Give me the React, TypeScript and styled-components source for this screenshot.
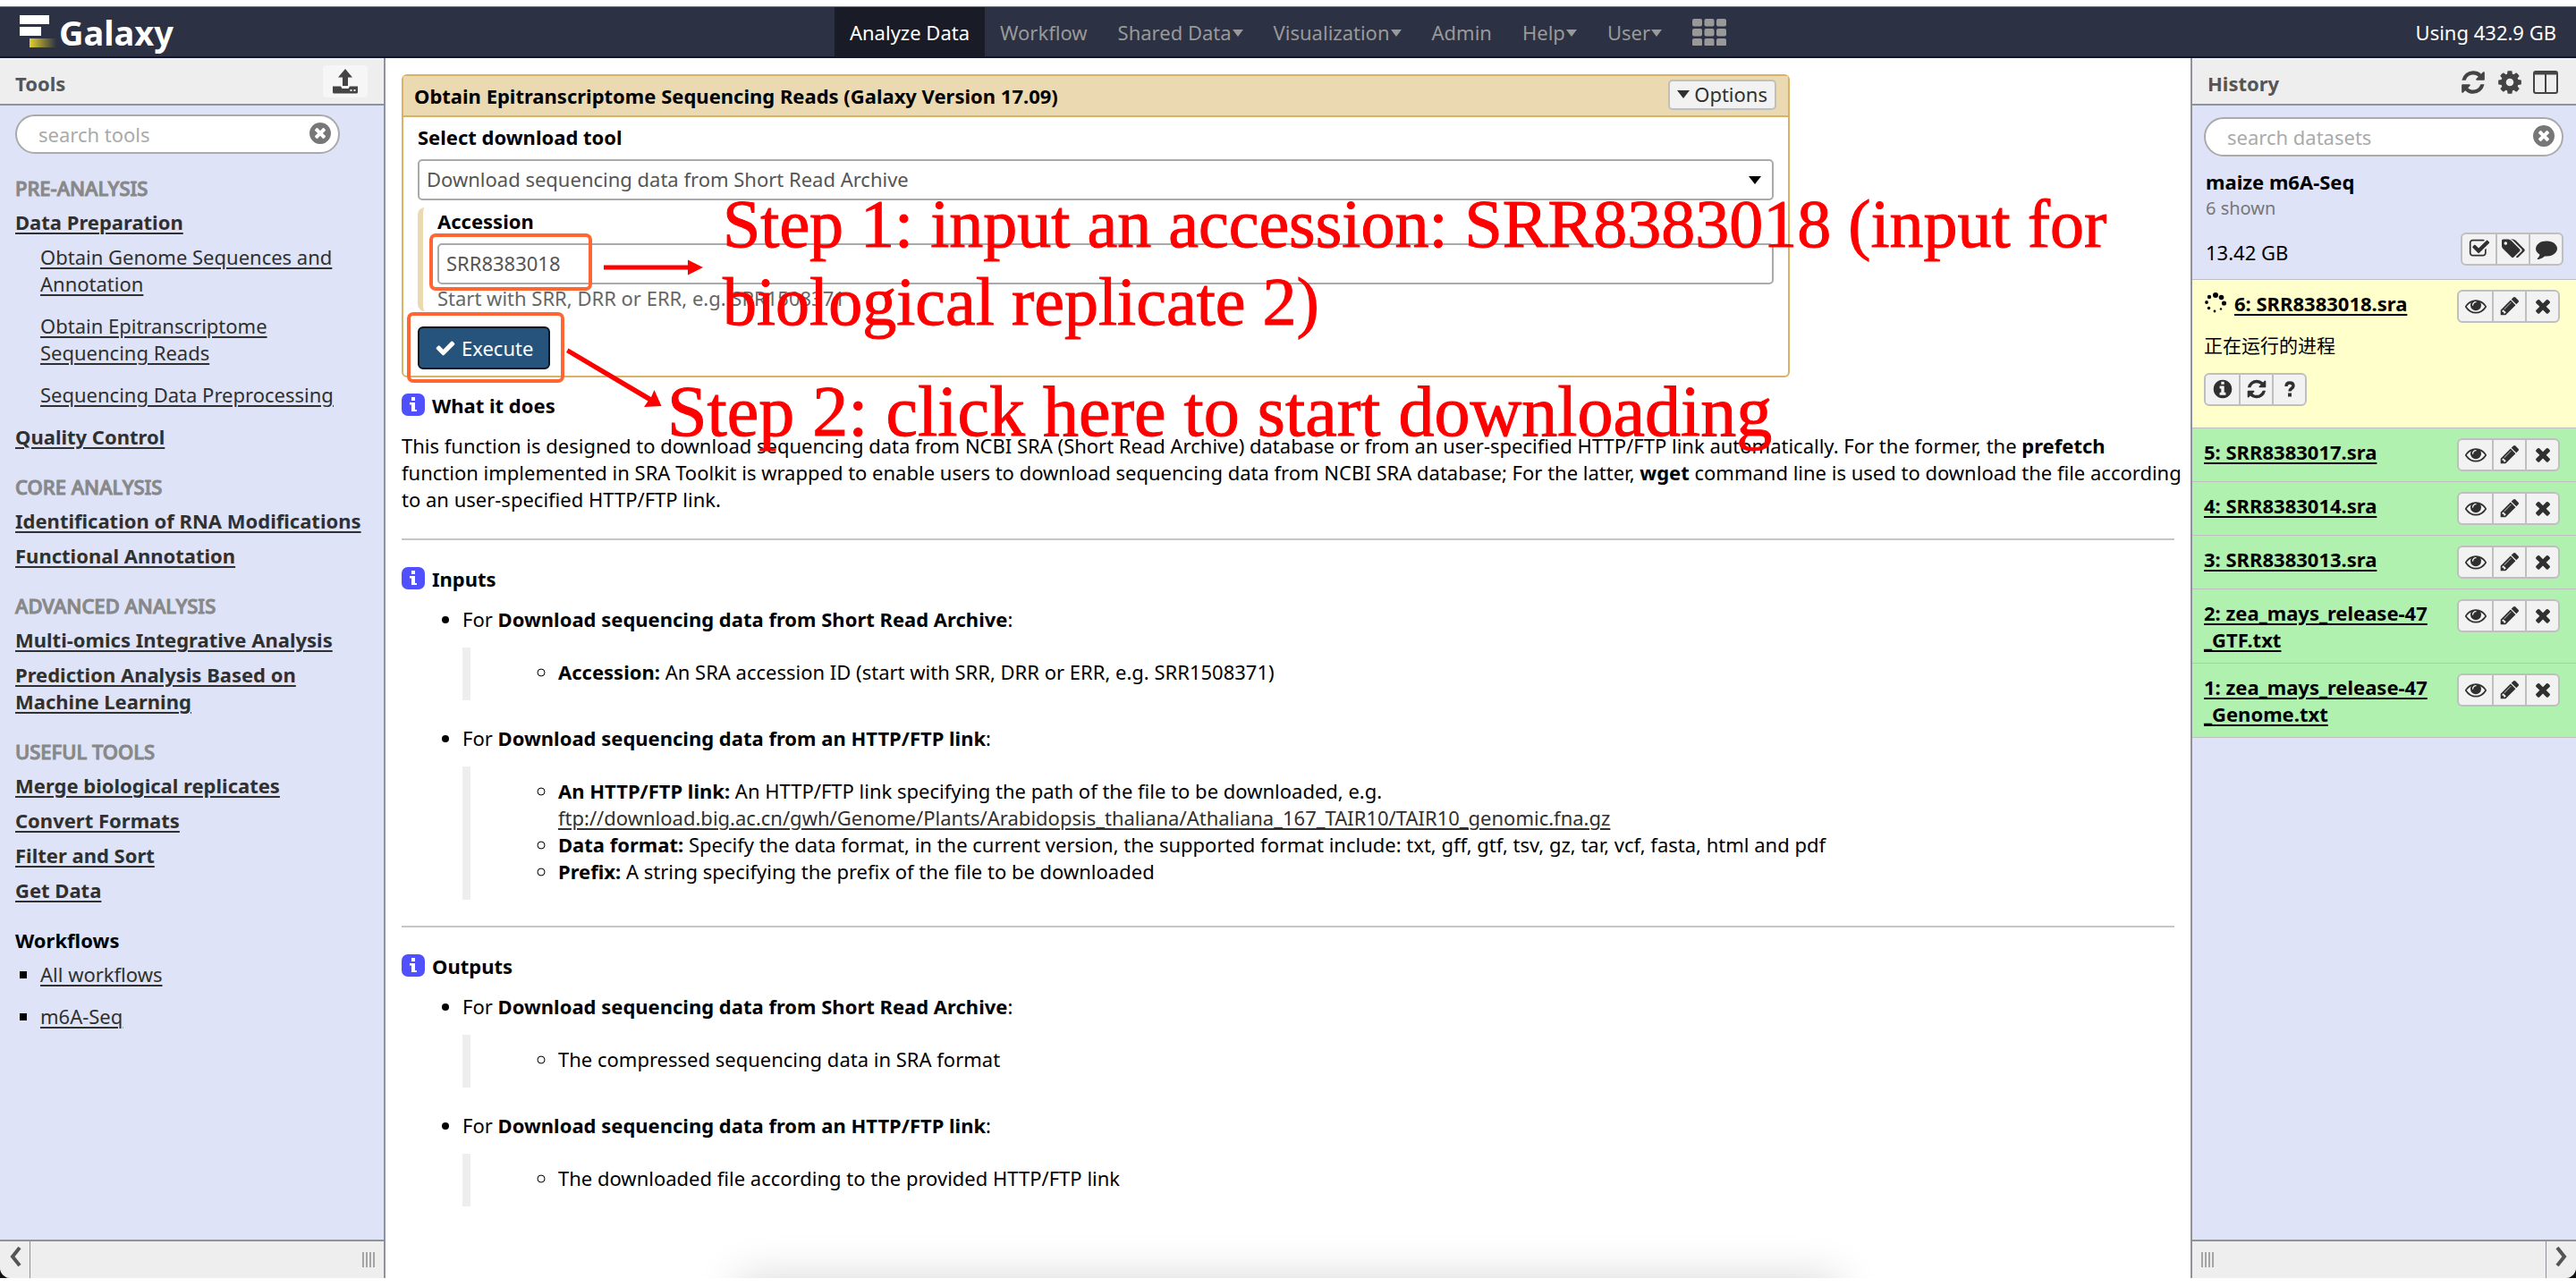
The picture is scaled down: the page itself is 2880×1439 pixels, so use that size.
import React from "react";
import styled, { createGlobalStyle, css } from "styled-components";

const sans = `"Noto Sans", "Open Sans", "Noto Sans CJK SC", sans-serif`;

const c = {
  navy: "#2c3143",
  navyActive: "#191b26",
  panel: "#dee3f7",
  bar: "#eeeeee",
  line: "#8f919b",
  tan: "#ebd9b2",
  tanLine: "#d8b365",
  control: "#f2f2f2",
  controlLine: "#bfbfbf",
  ink: "#303030",
  red: "#ff0000",
  orange: "#ff6633",
};

const Global = createGlobalStyle`
  *, *::before, *::after { box-sizing: border-box; }
  body { margin: 0; background: #fff; color: #000; font: 22px/30px ${sans}; }
  button, input, select { font: inherit; color: inherit; margin: 0; }
  a { color: ${c.ink}; text-decoration: underline; text-underline-offset: 3px; text-decoration-thickness: 2px; }
  ul, h1, h2, h3, p, blockquote { margin: 0; padding: 0; font: inherit; }
`;

/* ---------- icons ---------- */

const circle =
  "q0 209-103 385.5t-279.5 279.5-385.5 103-385.5-103-279.5-279.5-103-385.5 103-385.5 279.5-279.5 385.5-103 385.5 103 279.5 279.5 103 385.5z";

const glyphs = {
  refresh:
    "M1639 1056q0 5-1 7-64 268-268 434.5t-478 166.5q-146 0-282.5-55t-243.5-157l-129 129q-19 19-45 19t-45-19-19-45v-448q0-26 19-45t45-19h448q26 0 45 19t19 45-19 45l-137 137q71 66 161 102t187 36q134 0 250-65t186-179q11-17 53-117 8-23 30-23h192q13 0 22.5 9.5t9.5 22.5zm25-800v448q0 26-19 45t-45 19h-448q-26 0-45-19t-19-45 19-45l138-138q-148-137-349-137-134 0-250 65t-186 179q-11 17-53 117-8 23-30 23h-199q-13 0-22.5-9.5t-9.5-22.5v-7q65-268 270-434.5t480-166.5q146 0 284 55.5t245 156.5l130-129q19-19 45-19t45 19 19 45z",
  cog: "M1152 896q0-106-75-181t-181-75-181 75-75 181 75 181 181 75 181-75 75-181zm512-109v222q0 12-8 23t-20 13l-185 28q-19 54-39 91 35 50 107 138 10 12 10 25t-9 23q-27 37-99 108t-94 71q-12 0-26-9l-138-108q-44 23-91 38-16 136-29 186-7 28-36 28h-222q-14 0-24.5-8.5t-11.5-21.5l-28-184q-49-16-90-37l-141 107q-10 9-25 9-14 0-25-11-126-114-165-168-7-10-7-23 0-12 8-23 15-21 51-66.5t54-70.5q-27-50-41-99l-183-27q-13-2-21-12.5t-8-23.5v-222q0-12 8-23t19-13l186-28q14-46 39-92-40-57-107-138-10-12-10-24 0-10 9-23 26-36 98.5-107.5t94.5-71.5q13 0 26 10l138 107q44-23 91-38 16-136 29-186 7-28 36-28h222q14 0 24.5 8.5t11.5 21.5l28 184q49 16 90 37l142-107q9-9 24-9 13 0 25 10 129 119 165 170 7 8 7 22 0 12-8 23-15 21-51 66.5t-54 70.5q26 50 41 98l183 28q13 2 21 12.5t8 23.5z",
  times:
    "M1490 1322q0 40-28 68l-136 136q-28 28-68 28t-68-28l-294-294-294 294q-28 28-68 28t-68-28l-136-136q-28-28-28-68t28-68l294-294-294-294q-28-28-28-68t28-68l136-136q28-28 68-28t68 28l294 294 294-294q28-28 68-28t68 28l136 136q28 28 28 68t-28 68l-294 294 294 294q28 28 28 68z",
  check:
    "M1671 566q0 40-28 68l-724 724-136 136q-28 28-68 28t-68-28l-136-136-362-362q-28-28-28-68t28-68l136-136q28-28 68-28t68 28l294 295 656-657q28-28 68-28t68 28l136 136q28 28 28 68z",
  pencil:
    "M491 1536l91-91-235-235-91 91v107h128v128h107zm523-928q0-22-22-22-10 0-17 7l-542 542q-7 7-7 17 0 22 22 22 10 0 17-7l542-542q7-7 7-17zm-54-192l416 416-832 832h-416v-416zm683 96q0 53-37 90l-166 166-416-416 166-165q36-38 90-38 53 0 91 38l235 234q37 39 37 91z",
  eye: "M1664 960q-152-236-381-353 61 104 61 225 0 185-131.5 316.5t-316.5 131.5-316.5-131.5-131.5-316.5q0-121 61-225-229 117-381 353 133 205 333.5 326.5t434.5 121.5 434.5-121.5 333.5-326.5zm-720-384q0-20-14-34t-34-14q-125 0-214.5 89.5t-89.5 214.5q0 20 14 34t34 14 34-14 14-34q0-86 61-147t147-61q20 0 34-14t14-34zm848 384q0 34-20 69-140 230-376.5 368.5t-499.5 138.5-499.5-139-376.5-368q-20-35-20-69t20-69q140-229 376.5-368t499.5-139 499.5 139 376.5 368q20 35 20 69z",
  checkbox:
    "M1472 930v318q0 119-84.5 203.5t-203.5 84.5h-832q-119 0-203.5-84.5t-84.5-203.5v-832q0-119 84.5-203.5t203.5-84.5h832q63 0 117 25 15 7 18 23 3 17-9 29l-49 49q-10 10-23 10-3 0-9-2-23-6-45-6h-832q-66 0-113 47t-47 113v832q0 66 47 113t113 47h832q66 0 113-47t47-113v-254q0-13 9-22l64-64q10-10 23-10 6 0 12 3 20 8 20 29zm231-489l-814 814q-24 24-57 24t-57-24l-430-430q-24-24-24-57t24-57l110-110q24-24 57-24t57 24l263 263 647-647q24-24 57-24t57 24l110 110q24 24 24 57t-24 57z",
  tags: "M448 448q0-53-37.5-90.5t-90.5-37.5-90.5 37.5-37.5 90.5 37.5 90.5 90.5 37.5 90.5-37.5 37.5-90.5zm1067 576q0 53-37 90l-491 492q-39 37-91 37-53 0-90-37l-715-716q-38-37-64.5-101t-26.5-117v-416q0-52 38-90t90-38h416q53 0 117 26.5t102 64.5l715 714q37 39 37 91zm384 0q0 53-37 90l-491 492q-39 37-91 37-36 0-59-14t-53-45l470-470q37-37 37-90 0-52-37-91l-715-714q-38-38-102-64.5t-117-26.5h224q53 0 117 26.5t102 64.5l715 714q37 39 37 91z",
  comment:
    "M1792 896q0 174-120 321.5t-326 233-450 85.5q-70 0-145-8-198 175-460 242-49 14-114 22-17 2-30.5-9t-17.5-29v-1q-3-4-.5-12t2-10 4.5-9.5l6-9 7-8.5 8-9q7-8 31-34.5t34.5-38 31-39.5 32.5-51 27-59 26-76q-157-89-247.5-220t-90.5-281q0-130 71-248.5t191-204.5 286-136.5 348-50.5q244 0 450 85.5t326 233 120 321.5z",
  info:
    "M1152 1376v-160q0-14-9-23t-23-9h-96v-512q0-14-9-23t-23-9h-320q-14 0-23 9t-9 23v160q0 14 9 23t23 9h96v320h-96q-14 0-23 9t-9 23v160q0 14 9 23t23 9h448q14 0 23-9t9-23zm-128-896v-160q0-14-9-23t-23-9h-192q-14 0-23 9t-9 23v160q0 14 9 23t23 9h192q14 0 23-9t9-23zm640 416" +
    circle,
  clear:
    "M1277 1122q0-26-19-45l-181-181 181-181q19-19 19-45 0-27-19-46l-90-90q-19-19-46-19-26 0-45 19l-181 181-181-181q-19-19-45-19-27 0-46 19l-90 90q-19 19-19 46 0 26 19 45l181 181-181 181q-19 19-19 45 0 27 19 46l90 90q19 19 46 19 26 0 45-19l181-181 181 181q19 19 45 19 27 0 46-19l90-90q19-19 19-46zm387-226" +
    circle,
};

type GlyphName = keyof typeof glyphs;

const Glyph = ({ name, size = 24 }: { name: GlyphName; size?: number }) => (
  <svg width={size} height={size} viewBox={name === "tags" ? "0 0 1920 1792" : "0 0 1792 1792"} fill="currentColor" aria-hidden="true">
    <path d={glyphs[name]} />
  </svg>
);

const QuestionGlyph = () => (
  <svg width="24" height="24" viewBox="0 0 24 24" aria-hidden="true">
    <path d="M8 9c0-3 2-4 4-4s4 1 4 3.5c0 3-4 2.5-4 6" fill="none" stroke="currentColor" strokeWidth="3.4" />
    <rect x="10" y="16.5" width="4" height="4" fill="currentColor" />
  </svg>
);

const UploadGlyph = () => (
  <svg width="30" height="30" viewBox="0 0 30 30" fill="currentColor" aria-hidden="true">
    <path d="M15 1l8 9.500h-5V20h-6V10.500H7z" />
    <path d="M1 20.500h9l1.500 2.500h7l1.500-2.500h9V27a1.500 1.500 0 0 1-1.500 1.500h-25A1.500 1.500 0 0 1 1 27zM20.500 24v2h2v-2zm4 0v2h2v-2z" fillRule="evenodd" />
  </svg>
);

const ColumnsGlyph = () => (
  <svg width="28" height="26" viewBox="0 0 28 26" fill="none" stroke="currentColor" aria-hidden="true">
    <rect x="1" y="1" width="26" height="24" rx="2" strokeWidth="2" />
    <path d="M1 3h26" strokeWidth="3" />
    <path d="M14 3v22" strokeWidth="2" />
  </svg>
);

const SpinnerGlyph = () => (
  <svg width="26" height="28" viewBox="0 -2 26 28" aria-hidden="true">
    {[
      [13, 4, 3], [19.5, 6.5, 2.8], [22.5, 13, 2.6], [19, 19.5, 1.2], [12, 22, 1.4], [5.5, 18.5, 1.7], [3, 12, 1.9], [6, 6, 2.2],
    ].map(([x, y, r]) => (
      <circle key={`${x}-${y}`} cx={x} cy={y} r={r} />
    ))}
  </svg>
);

const GridGlyph = () => (
  <svg width="38" height="30" viewBox="0 0 38 30" fill="currentColor" aria-hidden="true">
    {[0, 11, 22].map((y) => [0, 13.5, 27].map((x) => <rect key={`${x}-${y}`} x={x} y={y} width="11" height="8.5" rx="2" />))}
  </svg>
);

const LogoMark = () => (
  <svg width="44" height="38" viewBox="0 0 44 38" aria-hidden="true">
    <defs>
      <linearGradient id="tail">
        <stop offset="0" stopColor="#e2cf2b" />
        <stop offset="1" stopColor="#e2cf2b" stopOpacity="0" />
      </linearGradient>
    </defs>
    <rect width="33" height="10" fill="#fff" />
    <rect y="13" width="24" height="10" fill="#fff" />
    <rect x="11" y="26" width="30" height="10" fill="url(#tail)" />
  </svg>
);

const HelpBadge = () => (
  <svg width="26" height="27" viewBox="0 -2 26 27" aria-hidden="true">
    <rect width="26" height="25" rx="7" fill="#5050ff" />
    <path d="M11 4h4v4h-4zM9 10h6v8h2v2H11v-7.500H9z" fill="#fff" />
  </svg>
);

const ChevronGlyph = ({ flip }: { flip?: boolean }) => (
  <svg width="14" height="22" viewBox="0 0 14 22" fill="none" stroke="#555" strokeWidth="4" aria-hidden="true">
    <path d={flip ? "M2 1l8 10-8 10" : "M12 1L4 11l8 10"} />
  </svg>
);

/* ---------- frame ---------- */

const Page = styled.div`
  position: relative;
  min-height: 100vh;
  display: flex;
  flex-direction: column;
  padding: 7px 0 10px;
  overflow: hidden;
`;

const Masthead = styled.header`
  display: grid;
  grid-template-columns: 1fr auto 1fr;
  align-items: stretch;
  height: 58px;
  background: ${c.navy};
  border-top: 1px solid #6d6f77;
  border-bottom: 2px solid #12162c;
`;

const Brand = styled.a`
  display: flex;
  align-items: center;
  padding: 0 0 0 22px;
  color: #fff;
  font-size: 38px;
  font-weight: 700;
  text-decoration: none;
`;

const Nav = styled.nav`
  display: flex;
`;

const NavLink = styled.a<{ $active?: boolean }>`
  display: flex;
  align-items: center;
  padding: 0 17px;
  color: ${(p) => (p.$active ? "#fff" : "#999")};
  background: ${(p) => (p.$active ? c.navyActive : "transparent")};
  text-decoration: none;
`;

const Caret = styled.span`
  margin: 2px 0 0 1px;
  border: 6px solid transparent;
  border-top: 8px solid currentColor;
  border-bottom: 0;
`;

const Quota = styled.div`
  align-self: center;
  justify-self: end;
  padding-right: 22px;
  color: #fff;
`;

const Workspace = styled.div`
  flex: 1;
  display: grid;
  grid-template-columns: 431px minmax(0, 1fr) 431px;
  background: #111;
`;

const Panel = styled.aside<{ $side: "left" | "right" }>`
  display: flex;
  flex-direction: column;
  background: ${c.panel};
  overflow: hidden;
  ${(p) =>
    p.$side === "left"
      ? css`border-right: 2px solid ${c.line}; border-bottom-left-radius: 12px;`
      : css`border-left: 2px solid ${c.line}; border-bottom-right-radius: 12px;`}
`;

const PanelHeader = styled.div`
  display: flex;
  align-items: center;
  justify-content: space-between;
  height: 53px;
  padding: 0 18px 0 17px;
  background: ${c.bar};
  border-bottom: 2px solid ${c.line};
  color: #555;
`;

const PanelTitle = styled.h2`
  padding-top: 4px;
  font-weight: 700;
`;

const PanelBody = styled.div`
  flex: 1;
`;

const PanelFooter = styled.div<{ $reverse?: boolean }>`
  display: flex;
  flex-direction: ${(p) => (p.$reverse ? "row-reverse" : "row")};
  align-items: stretch;
  justify-content: space-between;
  height: 43px;
  background: ${c.bar};
  border-top: 2px solid ${c.line};
`;

const Collapse = styled.button<{ $right?: boolean }>`
  width: 34px;
  padding: 0 0 4px;
  border: 0;
  border-${(p) => (p.$right ? "left" : "right")}: 1px solid ${c.line};
  background: none;
`;

const Grip = styled.span`
  align-self: center;
  width: 14px;
  height: 17px;
  margin: 0 10px;
  background: repeating-linear-gradient(90deg, #a4a4a4 0 2px, #eee 2px 4px);
`;

const IconButton = styled.button<{ $raised?: boolean }>`
  display: flex;
  align-items: center;
  justify-content: center;
  padding: ${(p) => (p.$raised ? "3px 10px" : "0")};
  border: 0;
  border-radius: 4px;
  background: ${(p) => (p.$raised ? "#f6f6f6" : "none")};
  color: #444;
`;

const IconRow = styled.div`
  display: flex;
  align-items: center;
  gap: 11px;
  padding: 2px 2px 0 0;
`;

const SearchBox = styled.div`
  display: flex;
  align-items: center;
  height: 44px;
  padding: 0 6px 0 24px;
  border: 2px solid #aaa;
  border-radius: 22px;
  background: #fff;
`;

const SearchInput = styled.input`
  flex: 1;
  min-width: 0;
  padding: 0;
  border: 0;
  outline: 0;
  background: none;
  &::placeholder { color: #aaa; opacity: 1; }
`;

const ClearIcon = styled.span`
  display: flex;
  padding-bottom: 2px;
  color: #777;
`;

const Search = ({ label }: { label: string }) => (
  <SearchBox>
    <SearchInput type="text" placeholder={label} aria-label={label} />
    <IconButton type="button" aria-label="clear search">
      <ClearIcon>
        <Glyph name="clear" size={28} />
      </ClearIcon>
    </IconButton>
  </SearchBox>
);

/* ---------- tools panel ---------- */

const ToolSearch = styled.div`
  width: 363px;
  margin: 10px 0 23px 17px;
`;

const ToolSection = styled.section`
  padding: 0 17px;
  margin-bottom: 26px;
`;

const SectionTitle = styled.h3<{ $dark?: boolean }>`
  margin-bottom: 8px;
  color: ${(p) => (p.$dark ? "#000" : "#888")};
  font-weight: ${(p) => (p.$dark ? 700 : 500)};
  -webkit-text-stroke: ${(p) => (p.$dark ? "0" : "1px #888")};
`;

const ToolGroup = styled.div`
  display: flex;
  flex-direction: column;
  align-items: flex-start;
  gap: 9px;
  > a { font-weight: 700; }
`;

const ToolList = styled.ul<{ $square?: boolean }>`
  display: flex;
  flex-direction: column;
  gap: 17px;
  padding: 0 17px 8px 28px;
  list-style: ${(p) => (p.$square ? "square" : "none")};
`;

interface Tool {
  name: string;
  children?: string[];
}

const sections: { title: string; tools: Tool[] }[] = [
  {
    title: "PRE-ANALYSIS",
    tools: [
      {
        name: "Data Preparation",
        children: ["Obtain Genome Sequences and Annotation", "Obtain Epitranscriptome Sequencing Reads", "Sequencing Data Preprocessing"],
      },
      { name: "Quality Control" },
    ],
  },
  { title: "CORE ANALYSIS", tools: [{ name: "Identification of RNA Modifications" }, { name: "Functional Annotation" }] },
  {
    title: "ADVANCED ANALYSIS",
    tools: [{ name: "Multi-omics Integrative Analysis" }, { name: "Prediction Analysis Based on Machine Learning" }],
  },
  {
    title: "USEFUL TOOLS",
    tools: [{ name: "Merge biological replicates" }, { name: "Convert Formats" }, { name: "Filter and Sort" }, { name: "Get Data" }],
  },
];

const ToolsPanel = () => (
  <Panel $side="left">
    <PanelHeader>
      <PanelTitle>Tools</PanelTitle>
      <IconButton $raised type="button" aria-label="Upload data">
        <UploadGlyph />
      </IconButton>
    </PanelHeader>
    <PanelBody>
      <ToolSearch>
        <Search label="search tools" />
      </ToolSearch>
      {sections.map((s) => (
        <ToolSection key={s.title}>
          <SectionTitle>{s.title}</SectionTitle>
          <ToolGroup>
            {s.tools.map((t) => (
              <React.Fragment key={t.name}>
                <a href="#tool">{t.name}</a>
                {t.children && (
                  <ToolList>
                    {t.children.map((n) => (
                      <li key={n}>
                        <a href="#tool">{n}</a>
                      </li>
                    ))}
                  </ToolList>
                )}
              </React.Fragment>
            ))}
          </ToolGroup>
        </ToolSection>
      ))}
      <ToolSection>
        <SectionTitle $dark>Workflows</SectionTitle>
        <ToolList $square>
          <li><a href="#workflows">All workflows</a></li>
          <li><a href="#m6a">m6A-Seq</a></li>
        </ToolList>
      </ToolSection>
    </PanelBody>
    <PanelFooter>
      <Collapse type="button" aria-label="Collapse tools"><ChevronGlyph /></Collapse>
      <Grip />
    </PanelFooter>
  </Panel>
);

/* ---------- centre ---------- */

const Main = styled.main`
  padding: 18px 18px 0;
  background: #fff;
`;

const Card = styled.form`
  max-width: 1552px;
  border: 2px solid ${c.tanLine};
  border-radius: 6px;
`;

const CardHeader = styled.div`
  display: flex;
  align-items: center;
  justify-content: space-between;
  height: 46px;
  padding: 0 13px 2px 12px;
  background: ${c.tan};
  border-bottom: 2px solid ${c.tanLine};
`;

const CardTitle = styled.h1`
  padding-top: 2px;
  font-weight: 700;
`;

const OptionsButton = styled.button`
  display: flex;
  align-items: center;
  gap: 5px;
  height: 34px;
  padding: 0 8px 2px;
  border: 2px solid ${c.controlLine};
  border-radius: 5px;
  background: ${c.control};
  color: ${c.ink};
`;

const OptionsCaret = styled.span`
  border: 7px solid transparent;
  border-top: 9px solid ${c.ink};
  border-bottom: 0;
`;

const CardBody = styled.div`
  padding: 7px 16px;
`;

const FieldLabel = styled.label`
  display: block;
  padding-bottom: 10px;
  font-weight: 700;
`;

const fieldBox = css`
  display: block;
  width: 100%;
  height: 46px;
  padding: 0 8px 2px;
  border: 2px solid #aaa;
  border-radius: 5px;
  background: #fff;
  color: #555;
`;

const SelectWrap = styled.div`
  position: relative;
`;

const Select = styled.select`
  ${fieldBox}
  appearance: none;
`;

const SelectArrow = styled.span`
  position: absolute;
  right: 14px;
  top: 19px;
  border: 7px solid transparent;
  border-top: 9px solid #000;
  border-bottom: 0;
  pointer-events: none;
`;

const TextInput = styled.input`
  ${fieldBox}
`;

const Nested = styled.div`
  margin: 8px 0 17px;
  padding: 0 0 0 16px;
  border-left: 6px solid ${c.tan};
  border-radius: 8px;
`;

const HelpText = styled.div`
  color: #666;
`;

const Execute = styled.button`
  display: flex;
  align-items: center;
  gap: 6px;
  height: 48px;
  padding: 0 17px;
  border: 2px solid #0d1620;
  border-radius: 6px;
  background: #25537b;
  color: #fff;
`;

const DocHeading = styled.h2`
  display: flex;
  gap: 8px;
  margin-bottom: 15px;
  font-weight: 700;
`;

const Docs = styled.article`
  padding-top: 16px;
`;

const Intro = styled.p`
  margin-right: -8px;
`;

const Rule = styled.hr`
  margin: 29px 0 28px;
  border: 0;
  border-top: 2px solid #c6c6c6;
`;

const OuterList = styled.ul`
  display: flex;
  flex-direction: column;
  gap: 27px;
  padding-left: 68px;
`;

const Quote = styled.blockquote`
  margin-top: 17px;
  padding: 12px 0 17px 98px;
  border-left: 9px solid #eee;
`;

const InnerList = styled.ul`
  list-style: circle;
`;

const Topic = ({ name, children }: { name: string; children: React.ReactNode }) => (
  <li>
    For <b>{name}</b>:
    <Quote>
      <InnerList>{children}</InnerList>
    </Quote>
  </li>
);

const sra = "Download sequencing data from Short Read Archive";
const http = "Download sequencing data from an HTTP/FTP link";

const Center = () => (
  <Main>
    <Card>
      <CardHeader>
        <CardTitle>Obtain Epitranscriptome Sequencing Reads (Galaxy Version 17.09)</CardTitle>
        <OptionsButton type="button">
          <OptionsCaret />
          Options
        </OptionsButton>
      </CardHeader>
      <CardBody>
        <FieldLabel htmlFor="tool-select">Select download tool</FieldLabel>
        <SelectWrap>
          <Select id="tool-select" defaultValue="sra">
            <option value="sra">{sra}</option>
            <option value="http">{http}</option>
          </Select>
          <SelectArrow />
        </SelectWrap>
        <Nested>
          <FieldLabel htmlFor="accession">Accession</FieldLabel>
          <TextInput id="accession" type="text" defaultValue="SRR8383018" />
          <HelpText>Start with SRR, DRR or ERR, e.g. SRR1508371</HelpText>
        </Nested>
        <Execute type="button">
          <Glyph name="check" size={24} />
          Execute
        </Execute>
      </CardBody>
    </Card>
    <Docs>
      <DocHeading><HelpBadge />What it does</DocHeading>
      <Intro>
        This function is designed to download sequencing data from NCBI SRA (Short Read Archive) database or from an user-specified
        HTTP/FTP link automatically. For the former, the <b>prefetch</b> function implemented in SRA Toolkit is wrapped to enable users
        to download sequencing data from NCBI SRA database; For the latter, <b>wget</b> command line is used to download the file
        according to an user-specified HTTP/FTP link.
      </Intro>
      <Rule />
      <DocHeading><HelpBadge />Inputs</DocHeading>
      <OuterList>
        <Topic name={sra}>
          <li><b>Accession:</b> An SRA accession ID (start with SRR, DRR or ERR, e.g. SRR1508371)</li>
        </Topic>
        <Topic name={http}>
          <li>
            <b>An HTTP/FTP link:</b> An HTTP/FTP link specifying the path of the file to be downloaded, e.g.
            <br />
            <a href="#genome">ftp://download.big.ac.cn/gwh/Genome/Plants/Arabidopsis_thaliana/Athaliana_167_TAIR10/TAIR10_genomic.fna.gz</a>
          </li>
          <li>
            <b>Data format:</b> Specify the data format, in the current version, the supported format include: txt, gff, gtf, tsv, gz,
            tar, vcf, fasta, html and pdf
          </li>
          <li><b>Prefix:</b> A string specifying the prefix of the file to be downloaded</li>
        </Topic>
      </OuterList>
      <Rule />
      <DocHeading><HelpBadge />Outputs</DocHeading>
      <OuterList>
        <Topic name={sra}>
          <li>The compressed sequencing data in SRA format</li>
        </Topic>
        <Topic name={http}>
          <li>The downloaded file according to the provided HTTP/FTP link</li>
        </Topic>
      </OuterList>
    </Docs>
  </Main>
);

/* ---------- history panel ---------- */

const HistorySearch = styled.div`
  margin: 13px 14px 0 13px;
`;

const HistoryInfo = styled.div`
  padding: 13px 14px 15px 15px;
  border-bottom: 1px solid ${c.controlLine};
`;

const HistoryName = styled.div`
  font-weight: 700;
`;

const Shown = styled.div`
  color: #777;
  font-size: 20px;
`;

const SizeRow = styled.div`
  display: flex;
  align-items: flex-end;
  justify-content: space-between;
  margin-top: 12px;
`;

const ButtonGroup = styled.div`
  display: inline-flex;
  flex: none;
  border: 2px solid ${c.controlLine};
  border-radius: 6px;
  background: ${c.control};
`;

const GroupButton = styled.button`
  display: flex;
  align-items: center;
  justify-content: center;
  width: 37px;
  height: 33px;
  padding: 0 0 2px;
  border: 0;
  background: none;
  color: ${c.ink};
  & + & { border-left: 2px solid ${c.controlLine}; }
`;

const Dataset = styled.div<{ $running?: boolean }>`
  padding: 11px 18px 11px 13px;
  border-bottom: 1px solid ${c.controlLine};
  background: ${(p) => (p.$running ? "#ffffcc" : "#b0f1b0")};
`;

const DatasetHead = styled.div`
  display: flex;
  align-items: flex-start;
  justify-content: space-between;
`;

const DatasetName = styled.div`
  display: flex;
  gap: 8px;
  a { color: #000; font-weight: 700; }
`;

const NameLine = styled.span`
  white-space: nowrap;
`;

const RunningState = styled.div`
  margin: 10px 0 16px;
  font-size: 21px;
`;

const RunningBody = styled.div`
  padding-bottom: 13px;
  > div { vertical-align: top; }
`;

const DatasetActions = () => (
  <ButtonGroup>
    <GroupButton type="button" aria-label="View"><Glyph name="eye" /></GroupButton>
    <GroupButton type="button" aria-label="Edit"><Glyph name="pencil" /></GroupButton>
    <GroupButton type="button" aria-label="Delete"><Glyph name="times" /></GroupButton>
  </ButtonGroup>
);

const datasets: [string, string?][] = [
  ["5: SRR8383017.sra"],
  ["4: SRR8383014.sra"],
  ["3: SRR8383013.sra"],
  ["2: zea_mays_release-47", "_GTF.txt"],
  ["1: zea_mays_release-47", "_Genome.txt"],
];

const HistoryPanel = () => (
  <Panel $side="right">
    <PanelHeader>
      <PanelTitle>History</PanelTitle>
      <IconRow>
        <IconButton type="button" aria-label="Refresh"><Glyph name="refresh" size={30} /></IconButton>
        <IconButton type="button" aria-label="Settings"><Glyph name="cog" size={30} /></IconButton>
        <IconButton type="button" aria-label="All histories"><ColumnsGlyph /></IconButton>
      </IconRow>
    </PanelHeader>
    <PanelBody>
      <HistorySearch>
        <Search label="search datasets" />
      </HistorySearch>
      <HistoryInfo>
        <HistoryName>maize m6A-Seq</HistoryName>
        <Shown>6 shown</Shown>
        <SizeRow>
          13.42 GB
          <ButtonGroup>
            <GroupButton type="button" aria-label="Select"><Glyph name="checkbox" /></GroupButton>
            <GroupButton type="button" aria-label="Tags"><Glyph name="tags" size={26} /></GroupButton>
            <GroupButton type="button" aria-label="Annotation"><Glyph name="comment" /></GroupButton>
          </ButtonGroup>
        </SizeRow>
      </HistoryInfo>
      <Dataset $running>
        <DatasetHead>
          <DatasetName>
            <SpinnerGlyph />
            <a href="#dataset">6: SRR8383018.sra</a>
          </DatasetName>
          <DatasetActions />
        </DatasetHead>
        <RunningBody>
          <RunningState>正在运行的进程</RunningState>
          <ButtonGroup>
            <GroupButton type="button" aria-label="Details"><Glyph name="info" /></GroupButton>
            <GroupButton type="button" aria-label="Rerun"><Glyph name="refresh" /></GroupButton>
            <GroupButton type="button" aria-label="Help"><QuestionGlyph /></GroupButton>
          </ButtonGroup>
        </RunningBody>
      </Dataset>
      {datasets.map(([name, rest]) => (
        <Dataset key={name}>
          <DatasetHead>
            <DatasetName>
              <a href="#dataset">
                <NameLine>{name}</NameLine>
                {rest && <><br />{rest}</>}
              </a>
            </DatasetName>
            <DatasetActions />
          </DatasetHead>
        </Dataset>
      ))}
    </PanelBody>
    <PanelFooter $reverse>
      <Collapse $right type="button" aria-label="Collapse history"><ChevronGlyph flip /></Collapse>
      <Grip />
    </PanelFooter>
  </Panel>
);

/* ---------- tutorial marks drawn over the page ---------- */

const Callout = styled.p<{ $x: number; $y: number; $size: number }>`
  position: absolute;
  left: ${(p) => p.$x}px;
  top: ${(p) => p.$y}px;
  width: 1600px;
  color: ${c.red};
  font: ${(p) => p.$size}px/87px "Liberation Serif", serif;
  -webkit-text-stroke: 1px ${c.red};
`;

const Highlight = styled.div<{ $x: number; $y: number; $w: number; $h: number }>`
  position: absolute;
  left: ${(p) => p.$x}px;
  top: ${(p) => p.$y}px;
  width: ${(p) => p.$w}px;
  height: ${(p) => p.$h}px;
  border: 4px solid ${c.orange};
  border-radius: 7px;
  pointer-events: none;
`;

const Arrows = styled.svg`
  position: absolute;
  left: 620px;
  top: 280px;
  pointer-events: none;
`;

const DockShadow = styled.div`
  position: absolute;
  left: 0;
  right: 0;
  bottom: 10px;
  height: 70px;
  overflow: hidden;
  pointer-events: none;
  &::after {
    content: "";
    position: absolute;
    left: 29%;
    right: 29%;
    top: 80px;
    height: 60px;
    box-shadow: 0 0 50px 10px rgba(0, 0, 0, 0.16);
  }
`;

export default function App() {
  return (
    <Page>
      <Global />
      <Masthead>
        <Brand href="#home"><LogoMark />Galaxy</Brand>
        <Nav>
          <NavLink href="#analyze" $active>Analyze Data</NavLink>
          <NavLink href="#workflow">Workflow</NavLink>
          <NavLink href="#shared">Shared Data<Caret /></NavLink>
          <NavLink href="#visualization">Visualization<Caret /></NavLink>
          <NavLink href="#admin">Admin</NavLink>
          <NavLink href="#help">Help<Caret /></NavLink>
          <NavLink href="#user">User<Caret /></NavLink>
          <NavLink href="#apps" aria-label="Apps"><GridGlyph /></NavLink>
        </Nav>
        <Quota>Using 432.9 GB</Quota>
      </Masthead>
      <Workspace>
        <ToolsPanel />
        <Center />
        <HistoryPanel />
      </Workspace>
      <DockShadow />
      <Highlight $x={480} $y={261} $w={182} $h={64} />
      <Highlight $x={455} $y={349} $w={176} $h={79} />
      <Arrows width="180" height="190" viewBox="0 0 180 190" fill={c.red}>
        <path d="M55 16.500h94v-6l17 8.500-17 8.500v-6H55z" />
        <path d="M15.500 109.500L108 164l3.500-8 8 18-19.500 1 4.500-6.500L13 114z" />
      </Arrows>
      <Callout $x={808} $y={207} $size={76}>Step 1: input an accession: SRR8383018 (input for biological replicate 2)</Callout>
      <Callout $x={746} $y={417} $size={80}>Step 2: click here to start downloading</Callout>
    </Page>
  );
}
